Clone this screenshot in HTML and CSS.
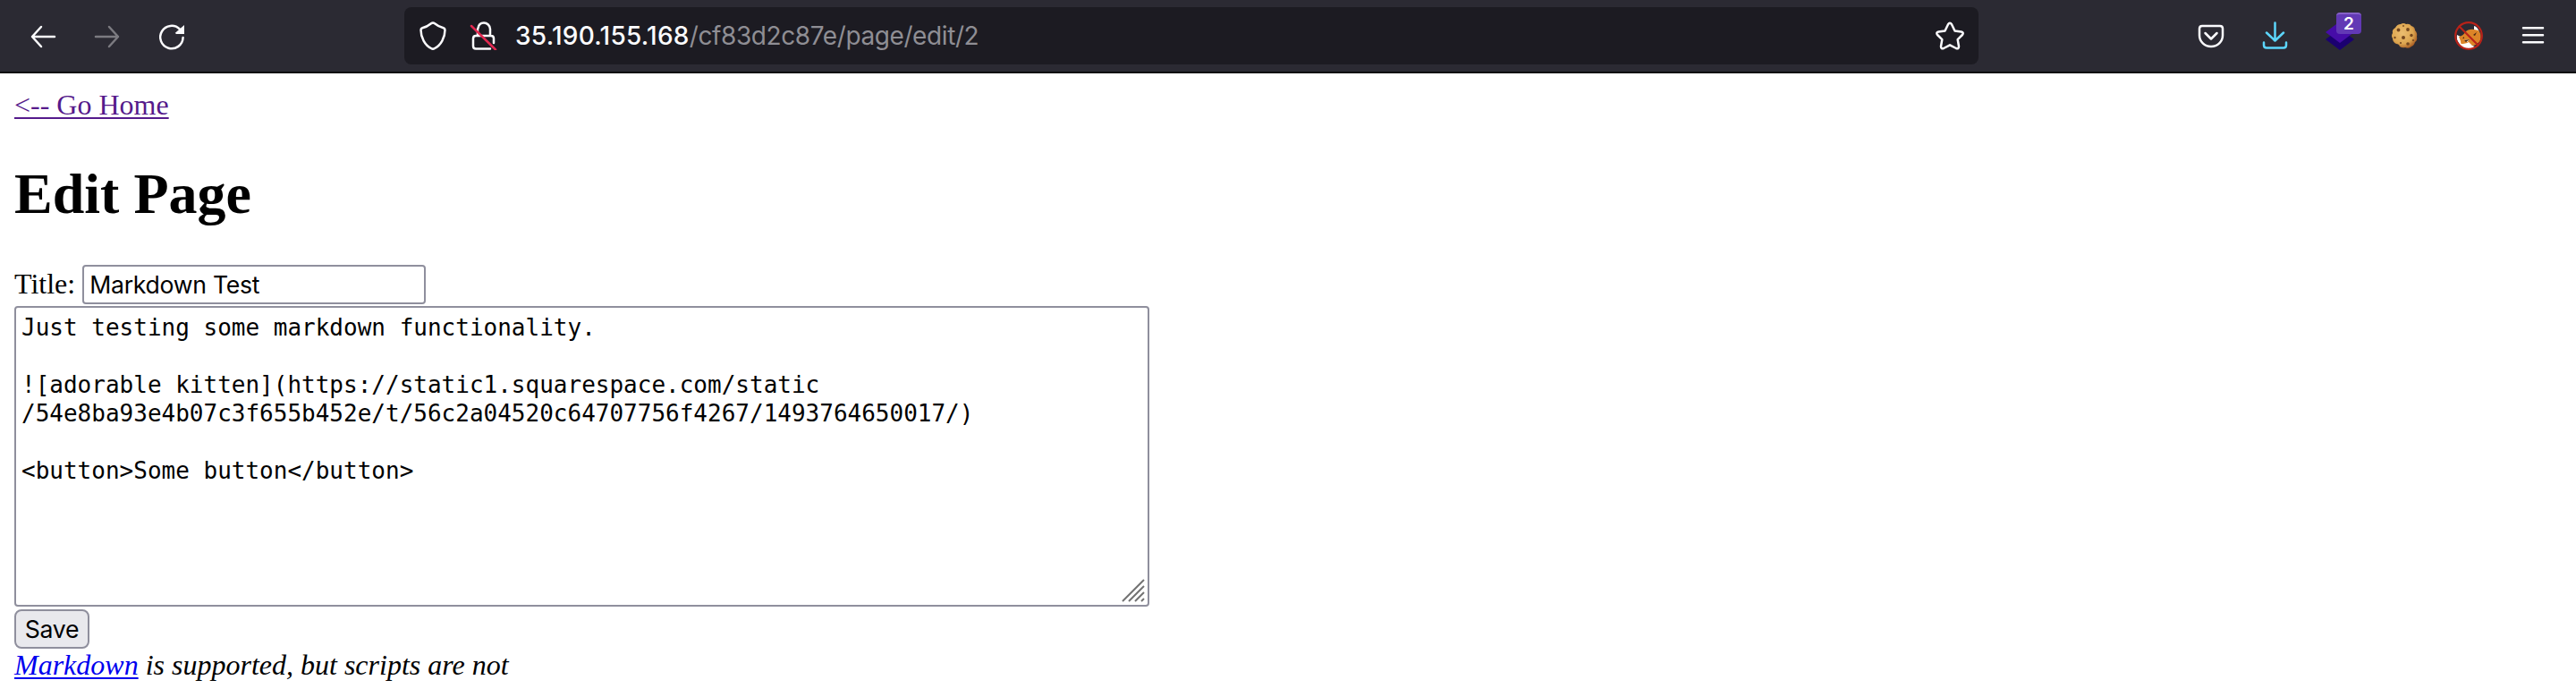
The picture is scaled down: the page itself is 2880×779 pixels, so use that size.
FILE: index.html
```html
<!DOCTYPE html>
<html lang="en">
<head>
<meta charset="utf-8">
<title>Edit Page</title>
<link rel="stylesheet" href="styles.css">
</head>
<body>
<header class="toolbar">
  <nav class="nav">
    <svg class="icon" viewBox="0 0 32 32"><path d="M29 17H4M14 6L4 17l10 11" transform="translate(0 -1)"/></svg>
    <svg class="icon dim" viewBox="0 0 32 32"><path d="M3 16h25M18 5l10 11-10 11"/></svg>
    <svg class="icon" viewBox="0 0 32 32"><path d="M28.6 17A12.7 12.7 0 1 1 25 7.700"/><path class="solid" d="M30 3v10h-9q-1.500-.5-.5-1.700z"/></svg>
  </nav>
  <div class="urlbar">
    <svg class="icon" viewBox="0 0 32 32"><path d="M16 1.500q1 0 2 .8c3 2.500 6.500 4.200 9.800 5q1.700.6 1.700 2.200C29.500 18 25 26.500 18 30q-2 1.300-4 0C7 26.500 2.500 18 2.500 9.500q0-1.600 1.700-2.200c3.300-.8 6.800-2.500 9.800-5q1-.8 2-.8z"/></svg>
    <svg class="icon lock" viewBox="0 0 32 32"><path d="M9.500 7.500C10 4 12.500 1.500 16 1.500s7 3 7 7V15M7 16h17q3 0 3 3v5M9 8.500V16M23 30.500H7q-3 0-3-3V19q0-3 3-3"/><path class="slash" d="M2 5l27 26.500"/></svg>
    <div class="url"><span class="host">35.190.155.168</span><span class="path">/cf83d2c87e/page/edit/2</span></div>
    <svg class="icon star" viewBox="0 0 32 32"><path d="M14 3.200q2-3 4 0l3.500 7.300 7.200 1q3.200.8 1.200 3.500l-5.200 5.200 1.300 7.600q0 3.200-3 2.200L16 26.300 9 30q-3 1-3-2.200l1.300-7.600L2.100 15q-2-2.700 1.200-3.500l7.200-1z"/></svg>
  </div>
  <div class="tools">
    <svg class="icon" viewBox="0 0 32 32"><path d="M6 5h20q3 0 3 3v7.500a13 12.500 0 0 1-26 0V8q0-3 3-3zM9.500 13l6.500 6.500 6.500-6.500"/></svg>
    <svg class="icon download" viewBox="0 0 32 32"><path d="M15.500 1.500V21M6 12.500l9.500 9 9.500-9M3 23.500v3q0 3 3 3h19q3 0 3-3v-3"/></svg>
    <div class="layers">
      <svg class="icon" viewBox="0 0 32 32"><path fill="#1b0070" d="M16 8l16 12-16 12L0 20z"/><path fill="#460ca8" d="M16 0l16 12-16 12L0 12z"/></svg>
      <span class="badge">2</span>
    </div>
    <svg class="icon fill" viewBox="0 0 32 32">
      <defs><radialGradient id="dough" cx=".42" cy=".4" r=".65"><stop offset="0" stop-color="#ebbd70"/><stop offset=".65" stop-color="#dda650"/><stop offset="1" stop-color="#a65a22"/></radialGradient></defs>
      <path fill="url(#dough)" d="M12 3q3-2 6 0 4-1 6 2 4 1 4 5 3 3 2 7 1 4-2 6-1 4-4 5-3 3-7 1-3 1-6-1-1-3-4-3-4-2-4-6-2-3 0-6-1-4 3-6 2-4 6-4z"/>
      <g fill="#74471f"><circle cx="9.500" cy="9.500" r="1.900"/><circle cx="20" cy="9" r="1.900"/><circle cx="15" cy="18" r="2"/><circle cx="24" cy="15.500" r="1.700"/><circle cx="20" cy="25" r="1.800"/><circle cx="5.500" cy="18" r="1.200"/><circle cx="12" cy="24" r="1.100"/><circle cx="15" cy="5" r=".9"/><circle cx="26" cy="21" r="1.100"/></g>
    </svg>
    <svg class="icon fill" viewBox="0 0 32 32">
      <path fill="#fff" d="M3 15l6 3 3 8 10 2-5 3q-8 0-12-7-3-4-2-9zM22 5q4 1 6 7l-2 3-4-4z"/>
      <path fill="#dc8428" d="M5 17q5-1 7-5 4-4 10-3l5 1q4 5 2 11-3 5-8 6-6-1-10 2-4-2-4-7z"/>
      <path fill="#fff" d="M7 25q6 0 9-2l4 4 3 1q-7 4-13 1zM11 21l5-1-1 3z"/>
      <path fill="#482713" d="M11 21l6-1-4 3zM21 15l4-3-2 4zM9 19l2-2v2z"/>
      <circle cx="16" cy="16" r="14.800" fill="none" stroke="#b92219" stroke-width="2.200"/><path d="M5.500 5.500l21 21" stroke="#b92219" stroke-width="2.200"/>
    </svg>
    <svg class="icon" viewBox="0 0 32 32"><path d="M5 7.300h22M5 15.300h22M5 23.300h22"/></svg>
  </div>
</header>
<main class="page">
  <a class="home" href="#">&lt;-- Go Home</a>
  <h1 class="heading">Edit Page</h1>
  <form class="form">
    <div class="title-row"><label class="title-label" for="title">Title:</label><input id="title" class="title-input" type="text" value="Markdown Test"></div>
    <div class="editor">
      <textarea class="body-input" spellcheck="false" aria-label="Body">Just testing some markdown functionality.

![adorable kitten](https://static1.squarespace.com/static
/54e8ba93e4b07c3f655b452e/t/56c2a04520c64707756f4267/1493764650017/)

&lt;button&gt;Some button&lt;/button&gt;</textarea>
      <svg class="grip" viewBox="0 0 26 26"><path d="M1 25L25 1M8 25L25 8M15 25L25 15M22 25l3-3"/></svg>
    </div>
    <button class="save" type="button">Save</button>
  </form>
  <div class="note"><a href="#">Markdown</a> is supported, but scripts are not</div>
</main>
</body>
</html>
```

FILE: styles.css
```css
* { box-sizing: border-box; }
body {
  margin: 0;
  background: #fff;
  color: #000;
  font: 32px/36px "Liberation Serif", "Times New Roman", serif;
}
.toolbar {
  display: flex;
  align-items: flex-start;
  height: 82px;
  padding: 8px 32px 0;
  background: #2b2a33;
  border-bottom: 2px solid #0c0c0d;
}
.icon {
  display: block;
  flex: none;
  width: 32px;
  height: 32px;
  fill: none;
  stroke: #fbfbfe;
  stroke-width: 2.5;
  stroke-linecap: round;
  stroke-linejoin: round;
}
.icon .solid { fill: #fbfbfe; stroke: none; }
.icon.dim { stroke: #7c7b81; }
.icon.fill, .layers .icon { stroke: none; }
.icon.download { stroke: #5cd6fb; }
.nav { display: flex; gap: 40px; width: 420px; padding-top: 17px; }
.urlbar {
  display: flex;
  align-items: center;
  width: 1760px;
  height: 64px;
  padding: 0 16px;
  border-radius: 8px;
  background: #1c1b22;
}
.lock { margin-left: 25px; }
.icon .slash { stroke: #e22850; }
.url {
  flex: 1;
  margin-left: 19px;
  font: 28px/40px Inter, sans-serif;
  letter-spacing: -0.4px;
  white-space: nowrap;
}
.host { color: #fbfbfe; font-weight: 500; letter-spacing: 0.25px; }
.path { color: #8f8e94; }
.tools { display: flex; gap: 40px; margin-left: 244px; padding-top: 16px; }
.layers { position: relative; }
.badge {
  position: absolute;
  top: -10px;
  left: 12px;
  width: 28px;
  height: 24px;
  border-radius: 4px;
  border-top: 2px solid #8560c8;
  background: #6239b5;
  color: #fff;
  font: 600 19px/22px Inter, sans-serif;
  text-align: center;
}
.page { padding: 17px 16px 0; }
.page a { text-decoration-thickness: 2px; text-underline-offset: 3px; }
.home { display: block; width: max-content; color: #551a8b; }
.heading { margin: 45px 0 0; font-size: 64px; line-height: 74px; font-weight: 700; }
.title-row { display: flex; align-items: center; gap: 8px; margin-top: 42px; height: 44px; }
.title-label { padding-bottom: 2px; }
.title-input {
  width: 384px;
  height: 44px;
  padding: 0 6px;
  border: 2px solid #8f8f9d;
  border-radius: 4px;
  background: #fff;
  color: #000;
  font: 26.67px Inter, sans-serif;
  letter-spacing: -0.3px;
}
.editor { position: relative; width: 1269px; height: 336px; margin-top: 2px; }
.body-input {
  display: block;
  width: 100%;
  height: 100%;
  padding: 6px 6px;
  border: 2px solid #8f8f9d;
  border-radius: 4px;
  background: #fff;
  color: #000;
  font: 26px/32px "DejaVu Sans Mono", monospace;
  resize: none;
  overflow: hidden;
}
.grip {
  position: absolute;
  right: 5px;
  bottom: 5px;
  width: 26px;
  height: 26px;
  fill: none;
  stroke: #737373;
  stroke-width: 2;
}
.save {
  display: block;
  width: 84px;
  height: 44px;
  margin-top: 3px;
  padding: 0;
  border: 2px solid #8f8f9d;
  border-radius: 8px;
  background: #e9e9ed;
  color: #000;
  font: 26.67px Inter, sans-serif;
  letter-spacing: -0.3px;
}
.note { font-style: italic; }
.note a { color: #0000ee; }
```
